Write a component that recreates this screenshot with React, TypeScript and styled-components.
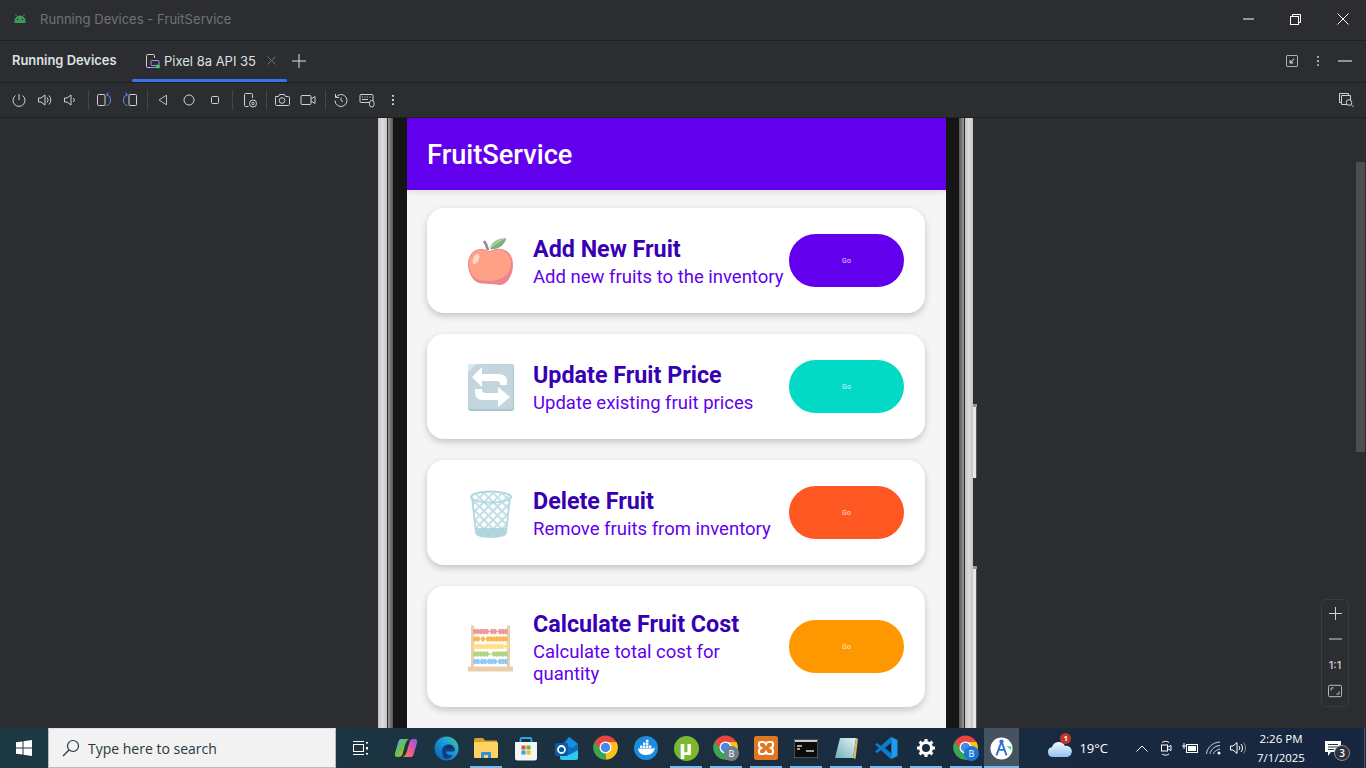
import React from "react";
import styled, { createGlobalStyle } from "styled-components";

const GlobalStyle = createGlobalStyle`
  html, body { margin: 0; padding: 0; background: #2b2d30; overflow: hidden; }
  * { box-sizing: border-box; }
`;

const Page = styled.div`
  width: 1366px;
  height: 768px;
  display: flex;
  flex-direction: column;
  font-family: Inter, "Liberation Sans", sans-serif;
  background: #2b2d30;
  overflow: hidden;
`;

/* ---------- IDE chrome ---------- */
const TitleBar = styled.div`
  height: 41px;
  flex: none;
  display: flex;
  align-items: center;
  padding: 0 0 2px 13px;
  border-bottom: 1px solid #1e1f22;
  color: #6f737a;
  font-size: 13px;
`;
const TitleText = styled.span`
  margin-left: 13px;
  letter-spacing: 0.05px;
`;
const WindowButtons = styled.div`
  margin-left: auto;
  display: flex;
`;
const WindowButton = styled.div`
  width: 47px;
  height: 38px;
  display: flex;
  align-items: center;
  justify-content: center;
`;
const TabBar = styled.div`
  height: 42px;
  flex: none;
  display: flex;
  align-items: stretch;
  padding-left: 12px;
  border-bottom: 1px solid #1e1f22;
  color: #dfe1e5;
  font-size: 13px;
`;
const PanelName = styled.div`
  width: 120px;
  display: flex;
  align-items: center;
  padding-bottom: 2px;
  font-weight: 600;
  font-size: 12.9px;
`;
const Tab = styled.div`
  position: relative;
  width: 155px;
  display: flex;
  align-items: center;
  gap: 3px;
  padding: 0 0 2px 13px;
  &::after {
    content: "";
    position: absolute;
    left: 0;
    right: 0;
    bottom: 0;
    height: 3px;
    border-radius: 2px;
    background: #3574f0;
  }
`;
const TabClose = styled.span`
  margin-left: 8px;
  display: flex;
`;
const AddTab = styled.div`
  width: 24px;
  display: flex;
  align-items: center;
  justify-content: center;
  padding-bottom: 2px;
`;
const TabTools = styled.div`
  margin-left: auto;
  display: flex;
  align-items: center;
  gap: 12px;
  padding: 0 14px 2px 0;
`;
const Toolbar = styled.div`
  height: 35px;
  flex: none;
  display: flex;
  align-items: center;
  padding: 0 12px 0 6px;
  border-bottom: 1px solid #1e1f22;
`;
const ToolCell = styled.div<{ $nudged?: boolean }>`
  width: 26px;
  flex: none;
  display: flex;
  align-items: center;
  justify-content: center;
  margin: ${(p) => (p.$nudged ? "0 -1px 0 2px" : "0")};
`;
const Sep = styled.div`
  width: 1px;
  height: 20px;
  margin: 0 2px 0 4px;
  background: #43454a;
`;
const ToolEnd = styled.div`
  margin-left: auto;
  display: flex;
`;

/* ---------- device area ---------- */
const Main = styled.div`
  position: relative;
  flex: 1;
  min-height: 0;
  padding-left: 378px;
  overflow: hidden;
`;
const Phone = styled.div`
  position: relative;
  width: 595px;
  height: 100%;
  display: flex;
`;
const BezelEdge = styled.div<{ $w: number }>`
  width: ${(p) => p.$w}px;
  flex: none;
  background: linear-gradient(90deg, #c4c4c4, #dcdcdc 50%, #c4c4c4);
`;
const BezelGrey = styled.div<{ $flip?: boolean }>`
  width: 6px;
  flex: none;
  background: linear-gradient(
    ${(p) => (p.$flip ? "270deg" : "90deg")},
    #2c2c2c 0 1px,
    #9a9a9a 1px,
    #555 100%
  );
`;
const BezelBlack = styled.div<{ $w: number }>`
  width: ${(p) => p.$w}px;
  flex: none;
  background: #151515;
`;
const SideButton = styled.div<{ $top: number; $h: number }>`
  position: absolute;
  left: 595px;
  top: ${(p) => p.$top}px;
  height: ${(p) => p.$h}px;
  width: 4px;
  background: linear-gradient(90deg, #e8e8e8 0 3px, #55575a 3px);
  border-top: 3px solid #999;
`;
const Screen = styled.div`
  width: 539px;
  flex: none;
  background: #f5f5f5;
  overflow: hidden;
  font-family: Roboto, "Liberation Sans", sans-serif;
`;
const AppBar = styled.div`
  height: 72px;
  display: flex;
  align-items: center;
  padding: 2px 0 0 20px;
  background: #6200ee;
  color: #fff;
  font-size: 27.2px;
  font-weight: 500;
  box-shadow: 0 2px 6px rgba(0, 0, 0, 0.1);
`;
const CardList = styled.div`
  display: flex;
  flex-direction: column;
  gap: 21px;
  padding: 18px 21px 0 20px;
`;
const Card = styled.div<{ $tall?: boolean }>`
  height: ${(p) => (p.$tall ? "121px" : "105px")};
  display: flex;
  align-items: center;
  padding: 0 21px 0 39px;
  background: #fff;
  border-radius: 17px;
  box-shadow: 0 3px 7px rgba(0, 0, 0, 0.2);
`;
const CardIcon = styled.div`
  width: 50px;
  height: 50px;
  flex: none;
  margin-right: 17px;
  display: flex;
  align-items: center;
  justify-content: center;
`;
const CardText = styled.div`
  flex: 1;
  min-width: 0;
  padding-top: 2px;
`;
const CardTitle = styled.div`
  color: #3700b3;
  font-size: 23.3px;
  line-height: 28px;
  font-weight: 700;
`;
const CardSub = styled.div`
  color: #6200ee;
  font-size: 18.5px;
  line-height: 22px;
  margin-top: 3px;
`;
const GoButton = styled.button<{ $color: string }>`
  width: 115px;
  height: 53px;
  flex: none;
  border: 0;
  border-radius: 27px;
  background: ${(p) => p.$color};
  color: rgba(255, 255, 255, 0.85);
  font-family: Roboto, sans-serif;
  font-size: 7px;
  font-weight: 400;
`;
const ZoomPanel = styled.div`
  position: absolute;
  left: 1321px;
  top: 481px;
  width: 28px;
  height: 108px;
  display: flex;
  flex-direction: column;
  border: 1px solid #393b40;
  border-radius: 5px;
`;
const ZoomItem = styled.div`
  height: 26px;
  display: flex;
  align-items: center;
  justify-content: center;
  color: #ced0d6;
  font-size: 11px;
  font-weight: 500;
`;
const ScrollThumb = styled.div`
  position: absolute;
  left: 1356px;
  top: 44px;
  width: 9px;
  height: 290px;
  background: #4b4d51;
`;

/* ---------- Windows taskbar ---------- */
const Taskbar = styled.div`
  height: 40px;
  flex: none;
  display: flex;
  align-items: stretch;
  background: linear-gradient(90deg, #1d3a43 0%, #1c3040 45%, #16263f 100%);
  color: #fff;
  font-family: "Open Sans", "Noto Sans", sans-serif;
`;
const StartButton = styled.div`
  width: 48px;
  display: flex;
  align-items: center;
  justify-content: center;
`;
const SearchBox = styled.div`
  width: 288px;
  display: flex;
  align-items: center;
  gap: 8px;
  padding-left: 13px;
  background: #f2f2f2;
  border: 1px solid #b9bcbe;
  border-top-color: #e0e0e0;
  color: #27363f;
  font-size: 14px;
`;
const TaskRow = styled.div`
  display: flex;
  padding-left: 5px;
`;
const TaskCell = styled.div<{ $open?: boolean; $gapAfter?: boolean }>`
  position: relative;
  width: 40px;
  display: flex;
  align-items: center;
  justify-content: center;
  margin-right: ${(p) => (p.$gapAfter ? "5px" : "0")};
  &::after {
    content: "";
    display: ${(p) => (p.$open ? "block" : "none")};
    position: absolute;
    left: 4px;
    right: 4px;
    bottom: 0;
    height: 2px;
    background: #76b9ed;
  }
`;
const ActiveCell = styled(TaskCell)`
  width: 35px;
  margin-left: -2px;
  background: #45525f;
  &::after {
    left: 0;
    right: 0;
  }
`;
const Tray = styled.div`
  margin-left: auto;
  display: flex;
  align-items: center;
  padding-right: 14px;
  position: relative;
  &::after {
    content: "";
    position: absolute;
    right: 1px;
    top: 0;
    bottom: 0;
    width: 1px;
    background: #4a5666;
  }
`;
const Weather = styled.div`
  display: flex;
  align-items: center;
  gap: 6px;
  margin-right: 22px;
  font-size: 13px;
`;
const WeatherIcon = styled.div`
  position: relative;
  display: flex;
`;
const RedBadge = styled.span`
  position: absolute;
  left: 13px;
  top: -5px;
  width: 11px;
  height: 11px;
  border-radius: 50%;
  background: #c4322b;
  font-size: 7px;
  line-height: 11px;
  text-align: center;
  font-weight: 700;
`;
const TrayCell = styled.div`
  width: 24px;
  display: flex;
  align-items: center;
  justify-content: center;
`;
const Clock = styled.div`
  width: 54px;
  margin: 0 6px 0 4px;
  text-align: center;
  font-size: 11.5px;
  line-height: 19px;
`;
const Notify = styled.div`
  position: relative;
  width: 38px;
  height: 100%;
  display: flex;
  align-items: center;
  justify-content: center;
`;
const NotifyBadge = styled.span`
  position: absolute;
  left: 20px;
  top: 17px;
  width: 16px;
  height: 16px;
  border-radius: 50%;
  background: #2e3238;
  border: 1px solid #8a8f96;
  font-size: 10px;
  font-weight: 600;
  line-height: 14px;
  text-align: center;
`;
const MicroLetter = styled.span`
  font-family: Roboto, sans-serif;
  font-weight: 900;
  font-size: 20px;
  line-height: 1;
  color: #fff;
`;
const UBall = styled.div`
  width: 25px;
  height: 25px;
  border-radius: 50%;
  background: #7cb82f;
  display: flex;
  align-items: center;
  justify-content: center;
`;

/* ---------- small drawings ---------- */
const stroke = "#ced0d6";
const Ic = ({ children, s = 16 }: { children: React.ReactNode; s?: number }) => (
  <svg width={s} height={s} viewBox="0 0 16 16" fill="none" stroke={stroke} strokeWidth="1">
    {children}
  </svg>
);

const AndroidHead = () => (
  <svg width="14" height="10" viewBox="0 0 14 10">
    <path d="M1.500 9V7a5.500 5.500 0 0 1 11 0v2z" fill="#3b9c5a" />
    <path d="M3.500 2 2.500 .5M10.500 2l1-1.500" stroke="#3b9c5a" />
    <circle cx="4.500" cy="5.500" r=".8" fill="#2b2d30" />
    <circle cx="9.500" cy="5.500" r=".8" fill="#2b2d30" />
  </svg>
);
const DeviceIcon = () => (
  <svg width="16" height="16" viewBox="0 0 16 16" fill="none" stroke={stroke}>
    <path d="M6 14.500H2.500a1 1 0 0 1-1-1v-11a1 1 0 0 1 1-1h6a1 1 0 0 1 1 1V5" />
    <rect x="6" y="7.500" width="8" height="5" rx="1" stroke="#b189f5" />
    <path d="M5 14.500h7" stroke="#b189f5" />
    <circle cx="13" cy="13.500" r="2" fill="#3ecf5e" stroke="none" />
  </svg>
);
const Rotate = ({ left }: { left?: boolean }) => (
  <svg width="16" height="16" viewBox="0 0 16 16" fill="none">
    <g transform={left ? "matrix(-1 0 0 1 16 0)" : undefined}>
      <rect x="1.500" y="2.500" width="7.500" height="11" rx="1" stroke={stroke} />
      <path d="M10.500 13.500c2.800-.4 4-2.500 4-5.500s-1.200-5.100-4-5.500M10.500 2.500l2.200-1.800M10.500 2.500l2 2" stroke="#548af7" />
    </g>
  </svg>
);
const Speaker = ({ up }: { up?: boolean }) => (
  <Ic>
    <path d="M1.500 6v4h2.500l4 3V3L4 6z" />
    {up ? <path d="M10 5.500a3.500 3.500 0 0 1 0 5M12 3.500a6.500 6.500 0 0 1 0 9" /> : <path d="M10.500 6a3 3 0 0 1 0 4" />}
  </Ic>
);

const Apple = () => (
  <svg width="50" height="50" viewBox="0 0 50 50">
    <path d="M22 14c-1-4-1.600-6-4-9" stroke="#9b8a86" strokeWidth="2.800" fill="none" />
    <path d="M24 13c1-7 7-11 16-11-1 7-8 12-16 11z" fill="#a7c79f" />
    <path d="M24 13c5-4 10-7 16-11-1 7-8 12-16 11z" fill="#7fae7d" />
    <path d="M25 48c-4 0-5-.5-9-.5C8 47.500 2 38 2 28c0-9 6-15 13-15 4 0 7 2 9 2s6-3 11-2c8 1 12 8 12 16 0 10-6 20-13 20-4 0-5-1-9-1z" fill="#ed8591" />
    <path d="M23 45c-3 0-5-.5-8-.5C8 44.500 3 36 3 27c0-8 5-13 12-13 4 0 7 2 9 2s6-3 10-2c7 1 11 7 11 13 0 10-8 18-22 18z" fill="#ffa187" />
    <ellipse cx="10" cy="23" rx="2.800" ry="5.500" transform="rotate(25 10 23)" fill="#ffd8cc" />
  </svg>
);
const Swap = () => (
  <svg width="50" height="50" viewBox="0 0 50 50">
    <rect x="2" y="2" width="46" height="47" rx="3" fill="#a9c6cf" />
    <rect x="2" y="2" width="45" height="45" rx="3" fill="#c3d6de" />
    <path d="M2 10V5a3 3 0 0 1 3-3h5z" fill="#dbe9ee" />
    <path d="M6 15 16 5v7h17q8 0 8 8v3h-7v-1q0-3-4-3H16v6z" fill="#fff" />
    <path d="M44 35 32 45v-7H17q-8 0-8-8v-3h7v1q0 3 4 3h12v-6z" fill="#fff" />
  </svg>
);
const Trash = () => {
  const diag = [];
  for (let i = -45; i < 60; i += 9) {
    diag.push(<path key={`a${i}`} d={`M${i} 5l45 45`} />, <path key={`b${i}`} d={`M${i + 45} 5l-45 45`} />);
  }
  return (
    <svg width="50" height="50" viewBox="0 0 50 50">
      <defs>
        <clipPath id="binClip">
          <path d="M6 8h38l-4 37c-.4 3-7 4-15 4s-14.600-1-15-4z" />
        </clipPath>
        <clipPath id="rimClip">
          <ellipse cx="25" cy="9" rx="20" ry="5.500" />
        </clipPath>
      </defs>
      <path d="M6 8h38l-4 37c-.4 3-7 4-15 4s-14.600-1-15-4z" fill="#fff" />
      <g clipPath="url(#binClip)" stroke="#c4e0e7" strokeWidth="2.200">{diag}</g>
      <g clipPath="url(#binClip)">
        <rect x="5" y="40" width="40" height="10" fill="#a9d0da" opacity="0.85" />
      </g>
      <ellipse cx="25" cy="9" rx="20" ry="5.500" fill="#fff" />
      <g clipPath="url(#rimClip)" stroke="#c4e0e7" strokeWidth="1.800">{diag}</g>
      <ellipse cx="25" cy="9" rx="20" ry="5.500" fill="none" stroke="#b4d6df" strokeWidth="2" />
      <path d="M6 9l4 36c.4 3 7 4 15 4s14.600-1 15-4l4-36" fill="none" stroke="#b4d6df" strokeWidth="1.800" />
    </svg>
  );
};
const Abacus = () => {
  const rows = [
    { c: "#ef9a9a", y: 9.500, bead: [8, 11, 14, 17, 20, 25, 28, 33, 36, 39] },
    { c: "#ffb74d", y: 17, bead: [8, 11, 16, 21, 24, 27, 30, 33, 36, 39] },
    { c: "#ffe082", y: 24.500, bead: [8, 11, 14, 17, 20, 23, 26, 29, 32, 35, 40] },
    { c: "#aed581", y: 32, bead: [8, 11, 14, 17, 20, 27, 30, 33, 36, 39] },
    { c: "#90caf9", y: 39.500, bead: [8, 11, 15, 18, 22, 25, 28, 33, 36, 39] },
  ];
  return (
    <svg width="50" height="50" viewBox="0 0 50 50">
      <rect x="5" y="3.500" width="3" height="42" fill="#eacfae" />
      <rect x="41" y="3.500" width="3" height="42" fill="#eacfae" />
      <rect x="2" y="44.500" width="45" height="5" fill="#eacfae" />
      {rows.map((r) => (
        <g key={r.y} fill={r.c}>
          <rect x="8" y={r.y - 0.5} width="33" height="1" fill="#c9b7a8" />
          {r.bead.map((x) => (
            <ellipse key={x} cx={x + 1} cy={r.y} rx="1.900" ry="2.800" />
          ))}
        </g>
      ))}
    </svg>
  );
};

const Chrome = ({ badge }: { badge?: string }) => (
  <svg width="26" height="26" viewBox="0 0 26 26">
    <circle cx="12.500" cy="12.500" r="12" fill="#e8453c" />
    <path d="M12.500 12.500 2 18.500A12 12 0 0 0 13 24.500z" fill="#34a853" />
    <path d="M12.500 7h11a12 12 0 0 1-10.500 17.500z" fill="#fbc116" />
    <path d="M2 6.500A12 12 0 0 0 2 18.500l5.500-3z" fill="#34a853" />
    <circle cx="12.500" cy="12.500" r="6" fill="#fff" />
    <circle cx="12.500" cy="12.500" r="4.700" fill="#4a88ee" />
    {badge && <circle cx="18.500" cy="18.500" r="7.500" fill={badge} />}
    {badge && (
      <text x="18.500" y="22" textAnchor="middle" fontSize="9" fill="#fff" fontFamily="Open Sans, sans-serif">
        B
      </text>
    )}
  </svg>
);
const Copilot = () => (
  <svg width="24" height="24" viewBox="0 0 24 24">
    <defs>
      <linearGradient id="cpA" x1="0" y1="0" x2="1" y2="1">
        <stop offset="0" stopColor="#3fb5e8" />
        <stop offset="0.5" stopColor="#6bbf4a" />
        <stop offset="1" stopColor="#f4c430" />
      </linearGradient>
      <linearGradient id="cpB" x1="0" y1="1" x2="1" y2="0">
        <stop offset="0" stopColor="#f28a3c" />
        <stop offset="0.5" stopColor="#e8559a" />
        <stop offset="1" stopColor="#8a5cf0" />
      </linearGradient>
    </defs>
    <path d="M7 3h8c-2 1-3 3-4 6l-2.500 9c-.5 2-2 3-4 3H3c-2 0-2.500-2-2-4L4 7c.5-2 1.500-4 3-4z" fill="url(#cpA)" />
    <path d="M17 21H9c2-1 3-3 4-6l2.500-9c.5-2 2-3 4-3H21c2 0 2.500 2 2 4l-3 10c-.5 2-1.500 4-3 4z" fill="url(#cpB)" />
  </svg>
);
const Edge = () => (
  <svg width="25" height="25" viewBox="0 0 25 25">
    <defs>
      <linearGradient id="edA" x1="0" y1="1" x2="1" y2="0">
        <stop offset="0" stopColor="#0c59a4" />
        <stop offset="0.6" stopColor="#1b9de2" />
        <stop offset="1" stopColor="#4cd07a" />
      </linearGradient>
    </defs>
    <circle cx="12.500" cy="12.500" r="12" fill="url(#edA)" />
    <path d="M8 15c0-4 3-6.500 6.500-6.500S21 10.500 21 14c0 1-1 1.500-2 1.500h-7c0 3 3 4.500 7 3.500-2 3.500-6 4.500-8.500 3.500C9 21 8 18 8 15z" fill="#0f3f7e" />
    <path d="M13 12h5c0-1.500-1-3-3-3-1.500 0-2 1.500-2 3z" fill="#1c2f40" />
  </svg>
);
const Folder = () => (
  <svg width="24" height="22" viewBox="0 0 24 22">
    <path d="M0 2.500A1.500 1.500 0 0 1 1.500 1H9l2 2.500h12v3H0z" fill="#d9a027" />
    <rect x="0" y="5" width="24" height="16" rx="1" fill="#ffd261" />
    <path d="M7 21v-5a1 1 0 0 1 1-1h8a1 1 0 0 1 1 1v5h-3v-3h-4v3z" fill="#2b93d9" />
  </svg>
);
const Store = () => (
  <svg width="24" height="25" viewBox="0 0 24 25">
    <path d="M6.500 7V3.500A1.500 1.500 0 0 1 8 2h8a1.500 1.500 0 0 1 1.500 1.500V7" fill="none" stroke="#2aa9e0" strokeWidth="1.800" />
    <path d="M1 6h22v16a2.500 2.500 0 0 1-2.500 2.500h-17A2.500 2.500 0 0 1 1 22z" fill="#f4f5f5" />
    <rect x="7.500" y="9.500" width="4" height="4" fill="#ee4b2b" />
    <rect x="12.500" y="9.500" width="4" height="4" fill="#5fb83c" />
    <rect x="7.500" y="14.500" width="4" height="4" fill="#2aa4ed" />
    <rect x="12.500" y="14.500" width="4" height="4" fill="#fcb716" />
  </svg>
);
const Outlook = () => (
  <svg width="25" height="25" viewBox="0 0 25 25">
    <path d="M6 10 15 1l9 7v11H6z" fill="#0f6cbd" />
    <path d="M15 1l9 7-6 4-7-4z" fill="#1490df" />
    <path d="M6 14l9 5 9-5v8a2 2 0 0 1-2 2H8a2 2 0 0 1-2-2z" fill="#2ec8f0" />
    <rect x="1" y="7" width="13" height="13" rx="1.500" fill="#0a5aa5" />
    <circle cx="7.500" cy="13.500" r="3.500" fill="none" stroke="#fff" strokeWidth="1.800" />
  </svg>
);
const Docker = () => (
  <svg width="24" height="24" viewBox="0 0 24 24">
    <circle cx="12" cy="12" r="12" fill="#1d8ce0" />
    <path d="M4 12.500h14c1 0 2-.5 2.500-1 .5 4-3 7.500-8.500 7.500C7 19 4.500 16.500 4 12.500z" fill="#fff" />
    <path d="M6 9.500h2.400v2.400H6zM9 9.500h2.400v2.400H9zM12 9.500h2.400v2.400H12zM9 6.600h2.400V9H9zM12 6.600h2.400V9H12zM12 3.800h2.400v2.300H12zM15 9.500h2.400v2.400H15z" fill="#fff" />
  </svg>
);
const Xampp = () => (
  <svg width="24" height="24" viewBox="0 0 24 24">
    <rect width="24" height="24" rx="2.500" fill="#e2761f" />
    <path
      d="M7 6h2.500c1.500 0 2 1 2.500 2 .5-1 1-2 2.500-2H17a2 2 0 0 1 2 2v1.500c0 1.500-1 2-2 2.500 1 .5 2 1 2 2.500V16a2 2 0 0 1-2 2h-2.500c-1.500 0-2-1-2.500-2-.5 1-1 2-2.500 2H7a2 2 0 0 1-2-2v-1.500c0-1.500 1-2 2-2.500-1-.5-2-1-2-2.500V8a2 2 0 0 1 2-2z"
      fill="none"
      stroke="#fff"
      strokeWidth="2.200"
    />
  </svg>
);
const Cmd = () => (
  <svg width="24" height="19" viewBox="0 0 24 19">
    <rect width="24" height="19" fill="#0c0c0c" stroke="#8a8f96" />
    <rect x="1" y="1" width="22" height="2" fill="#c8cbd0" />
    <path d="M3 7h5M3 10h3M12 12h8" stroke="#d5d5d5" strokeWidth="1.300" />
  </svg>
);
const Notepad = () => (
  <svg width="24" height="24" viewBox="0 0 24 24">
    <defs>
      <linearGradient id="npA" x1="0" y1="1" x2="1" y2="0">
        <stop offset="0" stopColor="#6fb0bd" />
        <stop offset="1" stopColor="#e4f3f4" />
      </linearGradient>
    </defs>
    <path d="M6 2h16l-3 20H1z" fill="url(#npA)" />
    <path d="M19 22l3-20 2 1-2.500 20z" fill="#d9b76d" />
  </svg>
);
const VSCode = () => (
  <svg width="24" height="24" viewBox="0 0 24 24">
    <path d="M17 1 23.500 4v16L17 23 5 12z" fill="#1f9cf0" />
    <path d="M17 1 7 10l-4-3-2 1.500L5 12l-4 3.500L3 17l4-3 10 9 1-1V2z" fill="#0a7ccf" />
    <path d="M17 7v10l-6-5z" fill="#16232f" />
  </svg>
);
const Gear = () => (
  <svg width="20" height="20" viewBox="0 0 20 20">
    <circle cx="10" cy="10" r="5.500" fill="none" stroke="#fff" strokeWidth="3" />
    <path
      d="M10 1v3M10 16v3M1 10h3M16 10h3M3.600 3.600l2.200 2.200M14.200 14.200l2.200 2.200M16.400 3.600l-2.200 2.200M5.800 14.200l-2.200 2.200"
      stroke="#fff"
      strokeWidth="3"
    />
  </svg>
);
const StudioIcon = () => (
  <svg width="23" height="23" viewBox="0 0 25 25">
    <circle cx="12.500" cy="12.500" r="12" fill="#fff" />
    <path d="M12.500 5 7 20M12.500 5l5.500 15M8.500 14h8" stroke="#2a6fd6" strokeWidth="2" fill="none" />
    <circle cx="12.500" cy="5" r="2.300" fill="#2a6fd6" />
    <path d="M18 10h5v4z" fill="#3ddc84" />
  </svg>
);

const cards = [
  { title: "Add New Fruit", sub: "Add new fruits to the inventory", color: "#6200ee", icon: <Apple /> },
  { title: "Update Fruit Price", sub: "Update existing fruit prices", color: "#03dac5", icon: <Swap /> },
  { title: "Delete Fruit", sub: "Remove fruits from inventory", color: "#ff5722", icon: <Trash /> },
  { title: "Calculate Fruit Cost", sub: "Calculate total cost for quantity", color: "#ff9800", icon: <Abacus />, tall: true },
];

export default function App() {
  return (
    <Page>
      <GlobalStyle />
      <TitleBar>
        <AndroidHead />
        <TitleText>Running Devices - FruitService</TitleText>
        <WindowButtons>
          <WindowButton>
            <svg width="11" height="2"><path d="M0 1h11" stroke="#fff" /></svg>
          </WindowButton>
          <WindowButton>
            <svg width="11" height="11" fill="none" stroke="#fff">
              <rect x=".5" y="2.500" width="8" height="8" />
              <path d="M2.500 2.500V.5h8v8h-2" />
            </svg>
          </WindowButton>
          <WindowButton>
            <svg width="12" height="12" stroke="#fff"><path d="M.5.5l11 11M11.500.5l-11 11" /></svg>
          </WindowButton>
        </WindowButtons>
      </TitleBar>

      <TabBar>
        <PanelName>Running Devices</PanelName>
        <Tab>
          <DeviceIcon />
          Pixel 8a API 35
          <TabClose>
            <svg width="9" height="9" stroke="#6f737a"><path d="M.5.5l8 8M8.500.5l-8 8" /></svg>
          </TabClose>
        </Tab>
        <AddTab>
          <svg width="14" height="14" stroke="#dfe1e5"><path d="M7 0v14M0 7h14" /></svg>
        </AddTab>
        <TabTools>
          <Ic s={12}>
            <rect x=".5" y=".5" width="15" height="15" rx="2" strokeWidth="1.200" />
            <path d="M11 5 5.500 10.500M5.500 6.500v4h4" strokeWidth="1.400" />
          </Ic>
          <svg width="16" height="16"><path d="M8 3v1.800M8 7.100v1.800M8 11.200v1.800" stroke="#a8adb5" strokeWidth="2" /></svg>
          <svg width="14" height="2"><path d="M0 1h14" stroke="#8f939a" strokeWidth="2" /></svg>
        </TabTools>
      </TabBar>

      <Toolbar>
        <ToolCell>
          <Ic>
            <path d="M8 2v6M4.500 3.500a6 6 0 1 0 7 0" />
          </Ic>
        </ToolCell>
        <ToolCell><Speaker up /></ToolCell>
        <ToolCell><Speaker /></ToolCell>
        <Sep />
        <ToolCell><Rotate /></ToolCell>
        <ToolCell><Rotate left /></ToolCell>
        <Sep />
        <ToolCell><Ic s={14}><path d="M12 2.500v11L3.500 8z" /></Ic></ToolCell>
        <ToolCell><Ic><circle cx="8" cy="8" r="5" /></Ic></ToolCell>
        <ToolCell><Ic><rect x="4.500" y="4.500" width="7" height="7" rx="1" /></Ic></ToolCell>
        <Sep />
        <ToolCell $nudged>
          <Ic>
            <path d="M6.500 14.500h-3a1 1 0 0 1-1-1v-11a1 1 0 0 1 1-1h6a1 1 0 0 1 1 1V6" />
            <circle cx="11" cy="11.500" r="3.500" />
            <circle cx="11" cy="11.500" r="1.200" />
          </Ic>
        </ToolCell>
        <Sep />
        <ToolCell>
          <Ic>
            <path d="M1.500 4.500h3l1-2h5l1 2h3a1 1 0 0 1 1 1v7a1 1 0 0 1-1 1h-12a1 1 0 0 1-1-1v-7a1 1 0 0 1 1-1z" />
            <circle cx="8" cy="8.500" r="2.800" />
          </Ic>
        </ToolCell>
        <ToolCell>
          <Ic>
            <rect x="1" y="3.500" width="10" height="9" rx="1" />
            <path d="M11 7l4-2.500v7L11 9" />
          </Ic>
        </ToolCell>
        <Sep />
        <ToolCell>
          <Ic>
            <path d="M2.500 2v3.500H6M2.800 5.500A6 6 0 1 1 2 8.500" />
            <path d="M8 5.500V8.500l2 1" />
          </Ic>
        </ToolCell>
        <ToolCell>
          <Ic>
            <rect x="1" y="2.500" width="13" height="8" rx="1" />
            <path d="M3 5h1M5.500 5h1M8 5h1M10.500 5h1M3 7.500h6" />
            <rect x="10.500" y="8.500" width="4.500" height="6.500" rx="2.200" fill="#2b2d30" />
          </Ic>
        </ToolCell>
        <ToolCell>
          <svg width="16" height="16"><path d="M8 3v1.800M8 7.100v1.800M8 11.200v1.800" stroke={stroke} strokeWidth="2" /></svg>
        </ToolCell>
        <ToolEnd>
          <Ic>
            <path d="M3.500 10.500h-2v-9h9v2" />
            <path d="M9 12.500H3.500v-9h9V8" />
            <circle cx="11" cy="10.500" r="2.800" />
            <path d="M13 12.500l2.500 2.500" />
          </Ic>
        </ToolEnd>
      </Toolbar>

      <Main>
        <Phone>
          <BezelEdge $w={9} />
          <BezelGrey />
          <BezelBlack $w={14} />
          <Screen>
            <AppBar>FruitService</AppBar>
            <CardList>
              {cards.map((c) => (
                <Card key={c.title} $tall={c.tall}>
                  <CardIcon>{c.icon}</CardIcon>
                  <CardText>
                    <CardTitle>{c.title}</CardTitle>
                    <CardSub>{c.sub}</CardSub>
                  </CardText>
                  <GoButton $color={c.color}>Go</GoButton>
                </Card>
              ))}
            </CardList>
          </Screen>
          <BezelBlack $w={13} />
          <BezelGrey $flip />
          <BezelEdge $w={8} />
          <SideButton $top={286} $h={74} />
          <SideButton $top={448} $h={162} />
        </Phone>
        <ScrollThumb />
        <ZoomPanel>
          <ZoomItem><svg width="13" height="13" stroke={stroke}><path d="M6.500 0v13M0 6.500h13" /></svg></ZoomItem>
          <ZoomItem><svg width="13" height="2" stroke={stroke}><path d="M0 1h13" /></svg></ZoomItem>
          <ZoomItem>1:1</ZoomItem>
          <ZoomItem>
            <Ic s={14}>
              <rect x=".5" y="1.500" width="15" height="13" rx="1.500" />
              <path d="M3.500 7.500v-3h3M12.500 8.500v3h-3" />
            </Ic>
          </ZoomItem>
        </ZoomPanel>
      </Main>

      <Taskbar>
        <StartButton>
          <svg width="16" height="16" viewBox="0 0 16 16" fill="#fff">
            <path d="M0 2.300 6.500 1.400v6.100H0zM7.500 1.300 16 0v7.500H7.500zM0 8.500h6.500v6.100L0 13.700zM7.500 8.500H16V16l-8.500-1.300z" />
          </svg>
        </StartButton>
        <SearchBox>
          <svg width="18" height="18" viewBox="0 0 18 18" fill="none" stroke="#27363f" strokeWidth="1.200">
            <circle cx="11" cy="7" r="5.500" />
            <path d="M7 11l-6 6" />
          </svg>
          Type here to search
        </SearchBox>
        <TaskRow>
          <TaskCell $gapAfter>
            <svg width="17" height="16" fill="none" stroke="#fff">
              <path d="M0 1.500h11M0 14.500h11" />
              <rect x=".5" y="4.500" width="10" height="7" />
              <path d="M14 2v1.500M14 7v2.500M14 13v1.500" strokeWidth="2" />
            </svg>
          </TaskCell>
          <TaskCell><Copilot /></TaskCell>
          <TaskCell><Edge /></TaskCell>
          <TaskCell $open><Folder /></TaskCell>
          <TaskCell><Store /></TaskCell>
          <TaskCell><Outlook /></TaskCell>
          <TaskCell><Chrome /></TaskCell>
          <TaskCell><Docker /></TaskCell>
          <TaskCell $open><UBall><MicroLetter>µ</MicroLetter></UBall></TaskCell>
          <TaskCell $open><Chrome badge="#6f7f8c" /></TaskCell>
          <TaskCell $open><Xampp /></TaskCell>
          <TaskCell $open><Cmd /></TaskCell>
          <TaskCell $open><Notepad /></TaskCell>
          <TaskCell $open><VSCode /></TaskCell>
          <TaskCell $open><Gear /></TaskCell>
          <TaskCell $open><Chrome badge="#1976d2" /></TaskCell>
          <ActiveCell $open><StudioIcon /></ActiveCell>
        </TaskRow>
        <Tray>
          <Weather>
            <WeatherIcon>
              <svg width="26" height="20" viewBox="0 0 26 20">
                <defs>
                  <linearGradient id="cloudFill" x1="0" y1="0" x2="0" y2="1">
                    <stop offset="0" stopColor="#f1f7fc" />
                    <stop offset="1" stopColor="#8fc4ee" />
                  </linearGradient>
                </defs>
                <path d="M6 19a5 5 0 0 1-1-9.900A7 7 0 0 1 18 8a5.500 5.500 0 0 1 2.500 11z" fill="url(#cloudFill)" />
              </svg>
              <RedBadge>1</RedBadge>
            </WeatherIcon>
            19°C
          </Weather>
          <TrayCell>
            <svg width="12" height="7" fill="none" stroke="#fff"><path d="M.5 6.500 6 1l5.500 5.500" /></svg>
          </TrayCell>
          <TrayCell>
            <svg width="12" height="18" fill="none" stroke="#fff">
              <rect x="1.500" y="6" width="6" height="6" />
              <path d="M8 8l3-1.500v5L8 10M2 3.500c2-1.500 5-1.500 7 0M2 15c2 1.500 5 1.500 7 0" />
            </svg>
          </TrayCell>
          <TrayCell>
            <svg width="16" height="12" fill="none" stroke="#fff">
              <rect x="4.500" y="2.500" width="11" height="8" />
              <rect x="6" y="4" width="8" height="5" fill="#fff" stroke="none" />
              <path d="M0 4h4M2 1v6" />
            </svg>
          </TrayCell>
          <TrayCell>
            <svg width="16" height="14" fill="none" stroke="#cfd4da">
              <path d="M.5 13C1 7 6 1.500 14 1M4 13c.5-4 4-8 10-8.500M7.500 13c.3-2 3-4.500 6.500-5" />
              <circle cx="13" cy="12" r="1.500" fill="#fff" stroke="none" />
            </svg>
          </TrayCell>
          <TrayCell>
            <svg width="17" height="14" fill="none" stroke="#fff">
              <path d="M.5 5v4h2.500l4 3.500v-11L3 5z" />
              <path d="M9 5a3 3 0 0 1 0 4M11 3a6 6 0 0 1 0 8" />
              <path d="M13.500 1.500a9 9 0 0 1 0 11" stroke="#7f8894" />
            </svg>
          </TrayCell>
          <Clock>
            2:26 PM
            <br />
            7/1/2025
          </Clock>
          <Notify>
            <svg width="16" height="15" viewBox="0 0 16 15">
              <path d="M0 0h16v11H6l-3 4v-4H0z" fill="#fff" />
              <path d="M3 3.500h10M3 6h10M3 8.500h6" stroke="#27363f" />
            </svg>
            <NotifyBadge>3</NotifyBadge>
          </Notify>
        </Tray>
      </Taskbar>
    </Page>
  );
}
